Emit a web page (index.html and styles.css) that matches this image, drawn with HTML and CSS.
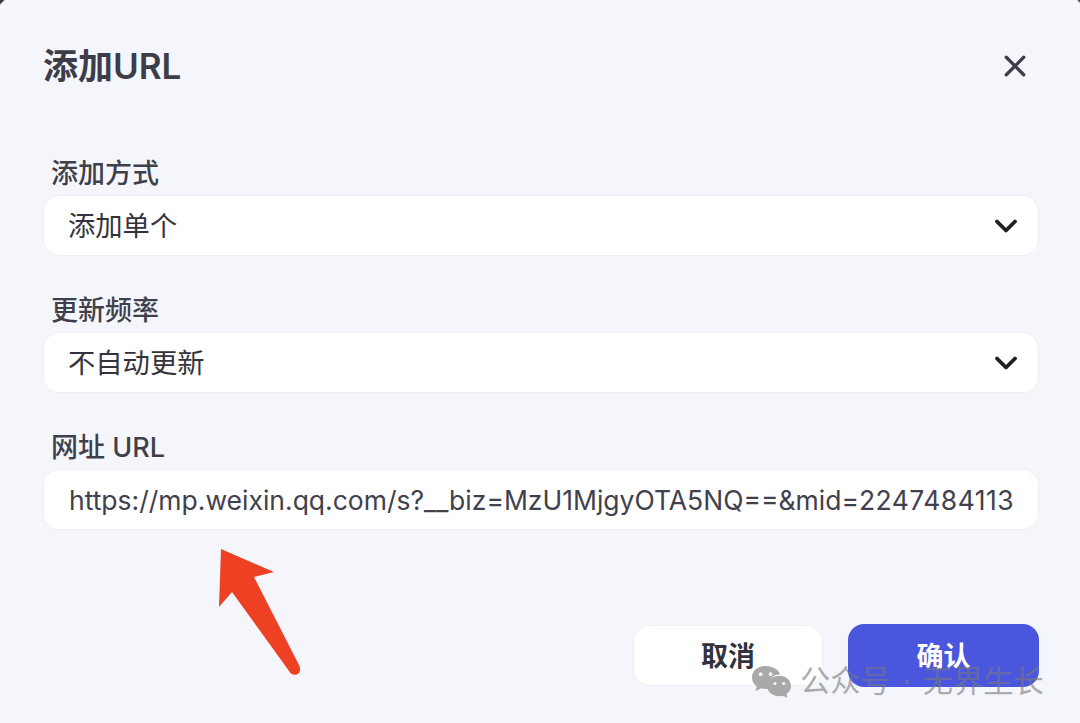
FILE: index.html
```html
<!DOCTYPE html>
<html lang="zh-CN">
<head>
<meta charset="utf-8">
<title>添加URL</title>
<link rel="stylesheet" href="styles.css">
</head>
<body>
<div class="dialog">
  <header class="head">
    <h1 class="title">添加URL</h1>
    <svg class="close" viewBox="0 0 24 24" aria-label="关闭"><path d="M2.5 2.5 21.500 21.500M21.500 2.500 2.500 21.500"/></svg>
  </header>
  <form class="form">
    <div class="field">
      <div class="label">添加方式</div>
      <div class="box"><span class="value">添加单个</span>
        <svg class="chev" viewBox="0 0 22 14"><path d="M2 2.500 11 11.500 20 2.500"/></svg></div>
    </div>
    <div class="field">
      <div class="label">更新频率</div>
      <div class="box"><span class="value">不自动更新</span>
        <svg class="chev" viewBox="0 0 22 14"><path d="M2 2.500 11 11.500 20 2.500"/></svg></div>
    </div>
    <div class="field">
      <div class="label">网址 URL</div>
      <div class="box"><span class="value url">https://mp.weixin.qq.com/s?__biz=MzU1MjgyOTA5NQ==&amp;mid=<span class="digits">2247484113</span></span></div>
    </div>
  </form>
  <footer class="foot">
    <div class="btn cancel">取消</div>
    <div class="btn ok">确认</div>
  </footer>
</div>
<svg class="arrow" viewBox="0 0 90 135"><path d="M6 4 59 27 39 32 84 120Q87 127 82 129.500 77 131 74 126L17 47 4 62Z"/></svg>
<div class="mark">
  <svg class="wechat" viewBox="0 0 42 34"><path class="b1" d="M15 1C7 1 1 6 1 13c0 4 2 7 5 9l-1.500 5 6-3c1.500.4 3 .6 4.500.6 1 0 1.500 0 2.500-.2C17 14 24 9 30 10 28.500 5 22.500 1 15 1Z"/><path class="b1" d="M29 11c-7 0-12.500 4.500-12.500 10.500S22 32 29 32c1.300 0 2.500-.2 3.700-.5l4.800 2.500-1.200-4.200c3-2 4.700-5 4.700-8.300C40.900 15.500 36 11 29 11Z"/><circle class="eye" cx="10" cy="9.500" r="1.900"/><circle class="eye" cx="20" cy="9.500" r="1.900"/><circle class="eye" cx="24.500" cy="19" r="1.600"/><circle class="eye" cx="33.500" cy="19" r="1.600"/></svg>
  <span class="marktext">公众号 · 无界生长</span>
</div>
</body>
</html>
```

FILE: styles.css
```css
* { box-sizing: border-box; }
html, body { margin: 0; height: 100%; }
body {
  position: relative;
  width: 1080px;
  height: 723px;
  overflow: hidden;
  background: #f5f6fb;
  font-family: Inter, "Noto Sans CJK SC", sans-serif;
  color: #3b3b46;
}
body::before,
body::after {
  content: "";
  position: absolute;
  top: 0;
}
body::before {
  left: 0;
  width: 5px;
  height: 5px;
  background: linear-gradient(135deg, #3a3a3e 35%, transparent 55%);
}
body::after {
  right: 0;
  width: 3px;
  height: 3px;
  background: linear-gradient(225deg, #55555a 35%, transparent 60%);
}
.dialog {
  display: flex;
  flex-direction: column;
  padding: 44px 41px 36px 43px;
  height: 723px;
}
.head {
  display: flex;
  justify-content: space-between;
  align-items: center;
  height: 44px;
}
.title {
  margin: 0;
  font-size: 35px;
  line-height: 44px;
  font-weight: 600;
  color: #3d3d49;
}
.close {
  width: 22px;
  height: 22px;
  margin-right: 13px;
  fill: none;
  stroke: #3d3d49;
  stroke-width: 3.6;
  stroke-linecap: round;
}
.form {
  display: flex;
  flex-direction: column;
  gap: 37px;
  margin-top: 68px;
}
.field { display: flex; flex-direction: column; gap: 3px; }
.label {
  padding-left: 8px;
  font-size: 27px;
  line-height: 36px;
  font-weight: 500;
  color: #40404c;
}
.box {
  display: flex;
  justify-content: space-between;
  align-items: center;
  height: 61px;
  padding: 0 21px 0 24px;
  background: #fff;
  border: 1px solid #eeeff3;
  border-radius: 16px;
}
.value {
  padding-top: 2px;
  font-size: 27.3px;
  line-height: 36px;
  color: #33333d;
  white-space: nowrap;
}
.url {
  padding: 0 0 0 1px;
  font-size: 26.5px;
  color: #41414d;
}
.digits { letter-spacing: .45px; }
.chev {
  width: 22px;
  height: 14px;
  fill: none;
  stroke: #1f1f28;
  stroke-width: 3.8;
  stroke-linecap: round;
  stroke-linejoin: round;
}
.foot {
  display: flex;
  justify-content: flex-end;
  align-items: center;
  gap: 25px;
  margin-top: auto;
}
.btn {
  display: flex;
  justify-content: center;
  align-items: center;
  padding-bottom: 3px;
  font-size: 27px;
  font-weight: 600;
  border-radius: 16px;
}
.cancel {
  width: 190px;
  height: 61px;
  background: #fff;
  border: 1px solid #eeeff3;
  color: #33333d;
}
.ok {
  width: 191px;
  height: 63px;
  background: #4b56df;
  color: #fff;
}
.arrow {
  position: absolute;
  left: 215px;
  top: 545px;
  width: 90px;
  height: 135px;
  fill: #ee4124;
}
.mark {
  position: absolute;
  left: 751px;
  top: 661px;
  display: flex;
  align-items: center;
  gap: 8px;
}
.wechat { width: 41px; height: 35px; }
.b1 { fill: #a9a9ab; }
.eye { fill: #f5f6fb; }
.marktext {
  font-size: 30.3px;
  line-height: 40px;
  word-spacing: 3px;
  color: rgba(120, 120, 125, .62);
  white-space: nowrap;
}
```
